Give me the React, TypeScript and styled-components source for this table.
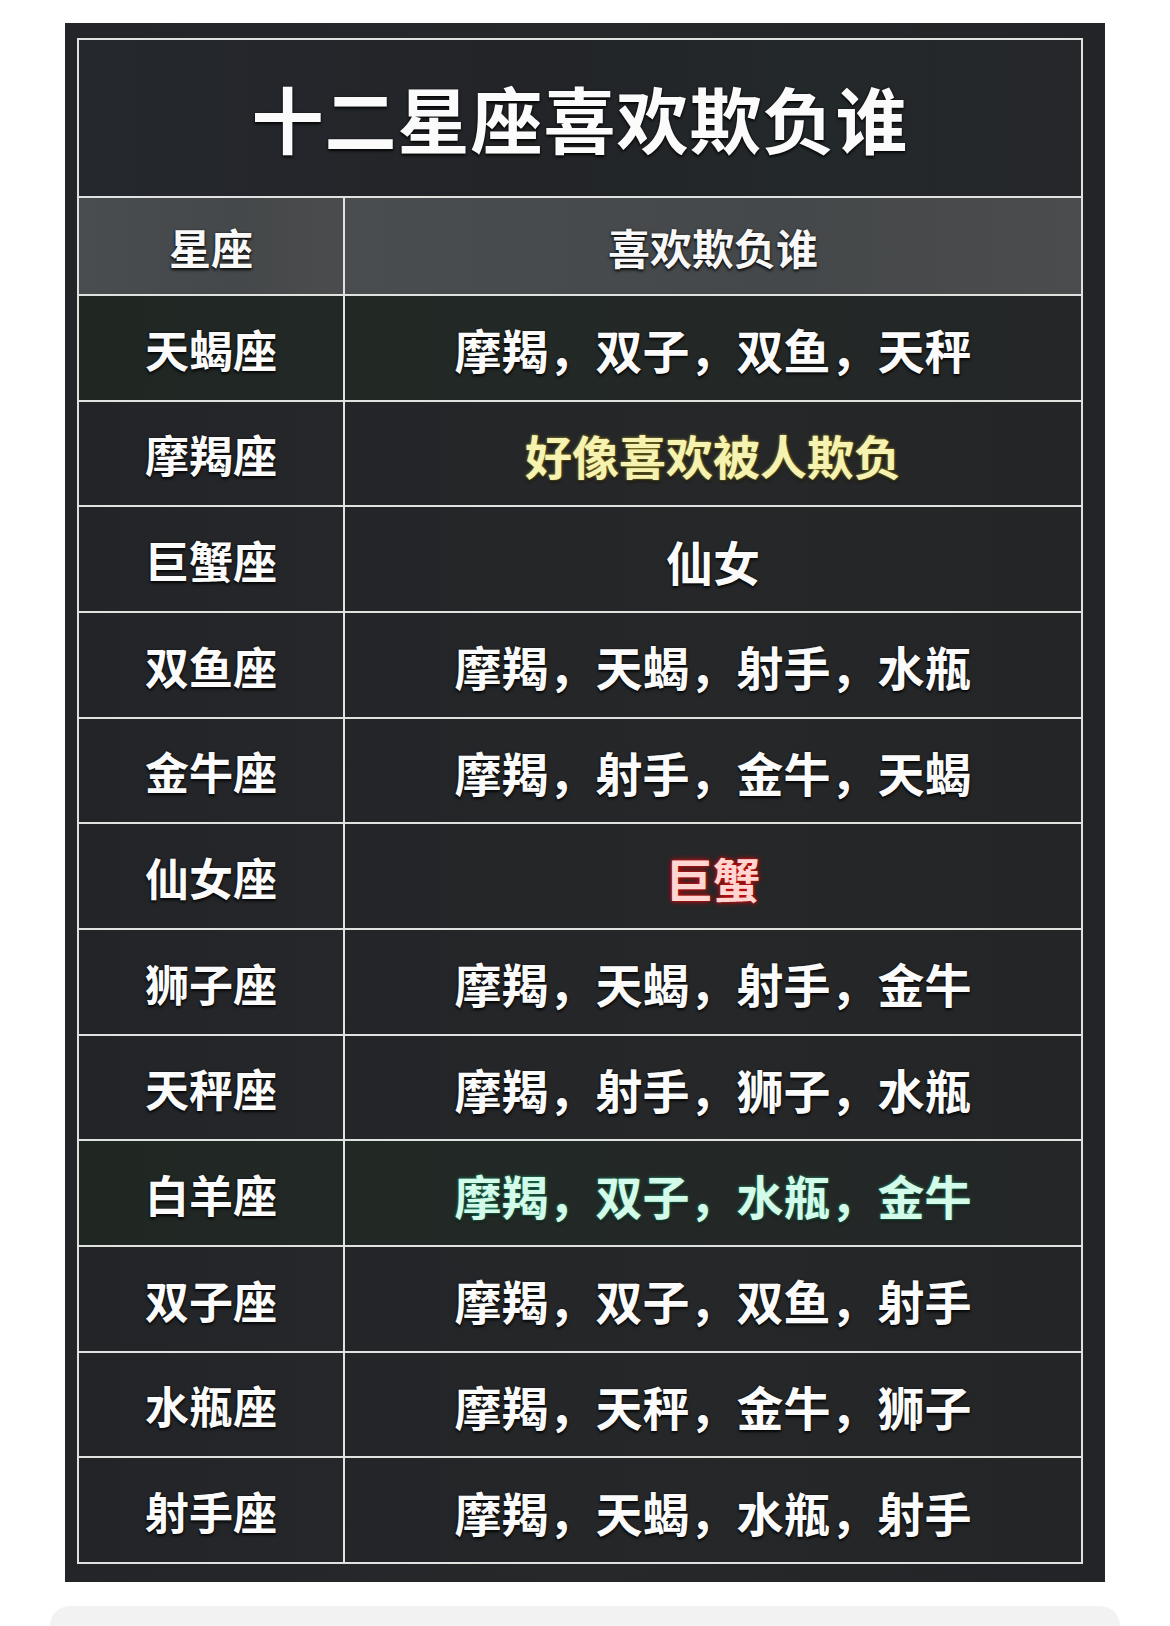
import React from "react";
import styled, { createGlobalStyle, css } from "styled-components";

const GlobalStyle = createGlobalStyle`
  html, body {
    margin: 0;
    padding: 0;
    background: #ffffff;
  }
  body {
    font-family: "Noto Sans CJK SC", "Noto Sans", sans-serif;
  }
`;

const Page = styled.div`
  width: 1170px;
  height: 1626px;
  overflow: hidden;
  background: #ffffff;
  display: flex;
  flex-direction: column;
  padding-top: 23px;
  box-sizing: border-box;
`;

const Panel = styled.div`
  margin-left: 65px;
  width: 1040px;
  box-sizing: border-box;
  padding: 15px 22px 18px 12px;
  background: linear-gradient(90deg, #232529 0%, #26282a 50%, #222427 100%);
`;

const Grid = styled.div`
  display: grid;
  grid-template-columns: 264px 736px;
  grid-template-rows: 156px 96px repeat(12, 103.67px);
  gap: 2px;
  padding: 2px;
  background: #e0e2e0;
  width: 1006px;
  box-sizing: border-box;
`;

const textShadow = "0 2px 3px rgba(0,0,0,0.85), 0 0 2px rgba(0,0,0,0.6)";

const TitleCell = styled.div`
  grid-column: 1 / 3;
  display: flex;
  align-items: center;
  justify-content: center;
  background: linear-gradient(90deg, #25282d 0%, #222428 45%, #23282a 70%, #25272b 100%);
  color: #fbfbfb;
  font-size: 72px;
  font-weight: 700;
  letter-spacing: 1px;
  text-shadow: ${textShadow};
  padding-bottom: 4px;
  box-sizing: border-box;
`;

const HeadCell = styled.div`
  display: flex;
  align-items: center;
  justify-content: center;
  background: linear-gradient(90deg, #4a4d4f 0%, #45484a 60%, #4a4c4d 100%);
  color: #f8f8f8;
  font-size: 42px;
  font-weight: 700;
  text-shadow: ${textShadow};
`;

type Tone = "white" | "yellow" | "red" | "cyan";

const toneStyles: Record<Tone, ReturnType<typeof css>> = {
  white: css`
    color: #fbfbfb;
    text-shadow: ${textShadow};
  `,
  yellow: css`
    color: #f6f3b2;
    text-shadow: 0 0 3px rgba(190, 170, 40, 0.9), 0 2px 3px rgba(0, 0, 0, 0.8);
  `,
  red: css`
    color: #ffd6d2;
    text-shadow: 0 0 3px #e01010, 0 0 6px rgba(220, 0, 0, 0.8);
  `,
  cyan: css`
    color: #d4fbe9;
    text-shadow: 0 0 3px rgba(40, 180, 130, 0.95), 0 2px 3px rgba(0, 0, 0, 0.7);
  `,
};

const LabelCell = styled.div<{ $green?: boolean }>`
  display: flex;
  align-items: center;
  justify-content: center;
  background: ${(p) =>
    p.$green
      ? "linear-gradient(90deg, #1f2723 0%, #222825 100%)"
      : "linear-gradient(90deg, #222427 0%, #25272a 100%)"};
  color: #fbfbfb;
  font-size: 44px;
  font-weight: 700;
  text-shadow: ${textShadow};
  padding-top: 2px;
  box-sizing: border-box;
`;

const ValueCell = styled.div<{ $tone: Tone; $green?: boolean }>`
  display: flex;
  align-items: center;
  justify-content: center;
  background: ${(p) =>
    p.$green
      ? "linear-gradient(90deg, #212925 0%, #232826 50%, #242628 100%)"
      : "linear-gradient(90deg, #232528 0%, #252729 50%, #232527 100%)"};
  font-size: 47px;
  font-weight: 700;
  padding-top: 2px;
  box-sizing: border-box;
  ${(p) => toneStyles[p.$tone]}
`;

const BottomBar = styled.div`
  margin-top: 24px;
  margin-left: 50px;
  width: 1070px;
  flex: 1;
  background: #f2f2f3;
  border-radius: 22px 22px 0 0;
`;

const rows: { sign: string; value: string; tone: Tone; green?: boolean }[] = [
  { sign: "天蝎座", value: "摩羯，双子，双鱼，天秤", tone: "white", green: true },
  { sign: "摩羯座", value: "好像喜欢被人欺负", tone: "yellow" },
  { sign: "巨蟹座", value: "仙女", tone: "white" },
  { sign: "双鱼座", value: "摩羯，天蝎，射手，水瓶", tone: "white" },
  { sign: "金牛座", value: "摩羯，射手，金牛，天蝎", tone: "white" },
  { sign: "仙女座", value: "巨蟹", tone: "red" },
  { sign: "狮子座", value: "摩羯，天蝎，射手，金牛", tone: "white" },
  { sign: "天秤座", value: "摩羯，射手，狮子，水瓶", tone: "white" },
  { sign: "白羊座", value: "摩羯，双子，水瓶，金牛", tone: "cyan", green: true },
  { sign: "双子座", value: "摩羯，双子，双鱼，射手", tone: "white" },
  { sign: "水瓶座", value: "摩羯，天秤，金牛，狮子", tone: "white" },
  { sign: "射手座", value: "摩羯，天蝎，水瓶，射手", tone: "white" },
];

export default function App() {
  return (
    <>
      <GlobalStyle />
      <Page>
        <Panel>
          <Grid>
            <TitleCell>十二星座喜欢欺负谁</TitleCell>
            <HeadCell>星座</HeadCell>
            <HeadCell>喜欢欺负谁</HeadCell>
            {rows.map((r) => (
              <React.Fragment key={r.sign}>
                <LabelCell $green={r.green}>{r.sign}</LabelCell>
                <ValueCell $tone={r.tone} $green={r.green}>
                  {r.value}
                </ValueCell>
              </React.Fragment>
            ))}
          </Grid>
        </Panel>
        <BottomBar />
      </Page>
    </>
  );
}
